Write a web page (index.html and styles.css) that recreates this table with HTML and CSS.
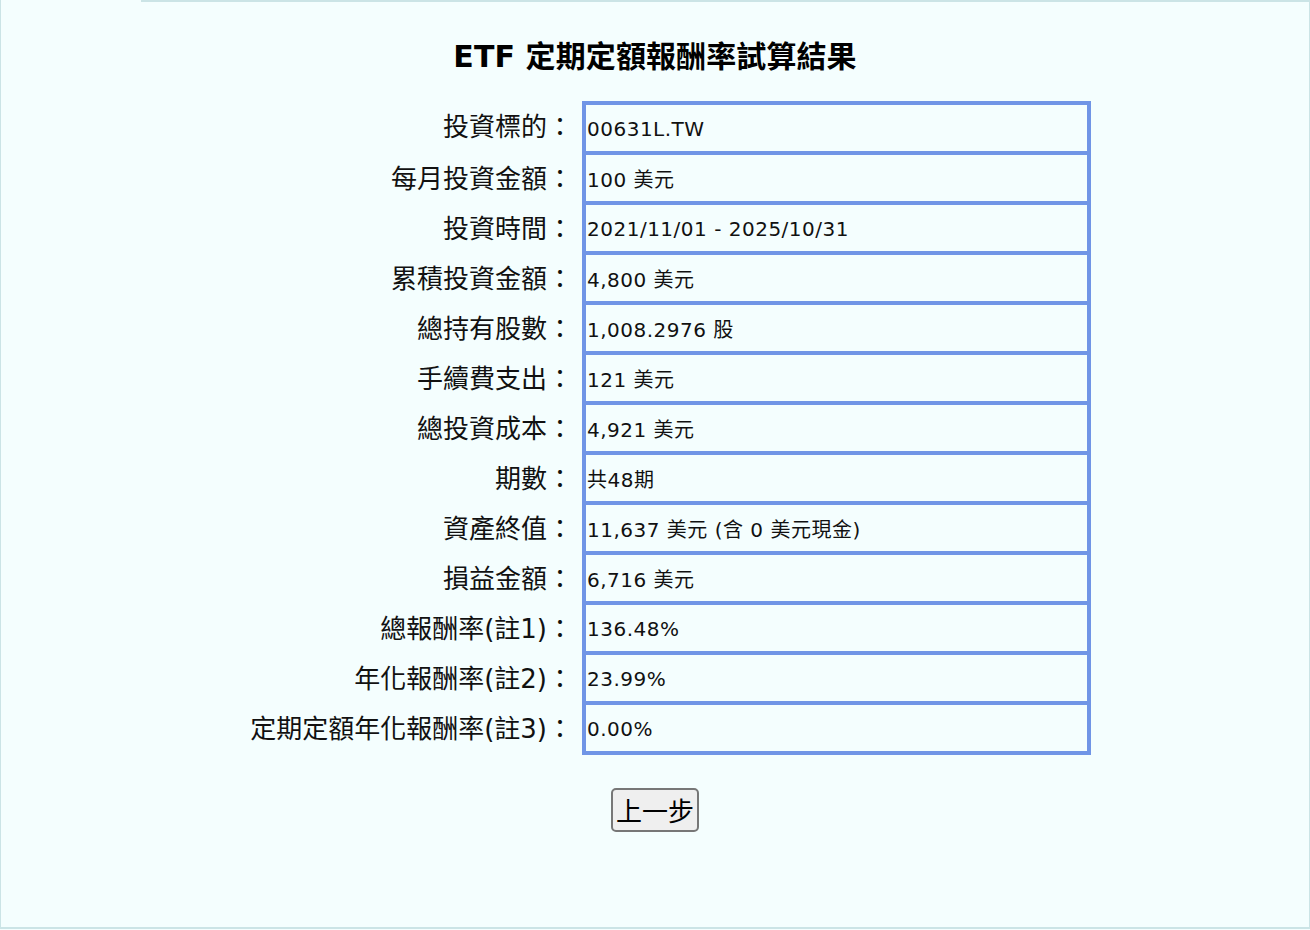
FILE: index.html
```html
<!DOCTYPE html>
<html lang="zh-Hant">
<head>
<meta charset="utf-8">
<title>ETF 定期定額報酬率試算結果</title>
<link rel="stylesheet" href="styles.css">
</head>
<body>
<div class="frame">
  <div class="topline"><span class="gap"></span><span class="rule"></span></div>
  <h2 class="title">ETF 定期定額報酬率試算結果</h2>
  <div class="result">
    <div class="row first"><div class="label">投資標的：</div><div class="value">00631L.TW</div></div>
    <div class="row"><div class="label">每月投資金額：</div><div class="value">100 美元</div></div>
    <div class="row"><div class="label">投資時間：</div><div class="value">2021/11/01 - 2025/10/31</div></div>
    <div class="row"><div class="label">累積投資金額：</div><div class="value">4,800 美元</div></div>
    <div class="row"><div class="label">總持有股數：</div><div class="value">1,008.2976 股</div></div>
    <div class="row"><div class="label">手續費支出：</div><div class="value">121 美元</div></div>
    <div class="row"><div class="label">總投資成本：</div><div class="value">4,921 美元</div></div>
    <div class="row"><div class="label">期數：</div><div class="value">共48期</div></div>
    <div class="row"><div class="label">資產終值：</div><div class="value">11,637 美元 (含 0 美元現金)</div></div>
    <div class="row"><div class="label">損益金額：</div><div class="value">6,716 美元</div></div>
    <div class="row"><div class="label">總報酬率(註1)：</div><div class="value">136.48%</div></div>
    <div class="row"><div class="label">年化報酬率(註2)：</div><div class="value">23.99%</div></div>
    <div class="row"><div class="label">定期定額年化報酬率(註3)：</div><div class="value">0.00%</div></div>
  </div>
  <div class="actions"><button class="back" type="button">上一步</button></div>
</div>
</body>
</html>
```

FILE: styles.css
```css
html, body {
  margin: 0;
  padding: 0;
  background: #f4fefe;
}

body {
  font-family: "DejaVu Sans", "Noto Sans CJK TC", sans-serif;
  color: #111;
}

.frame {
  box-sizing: border-box;
  width: 1310px;
  height: 929px;
  background: #f4fefe;
  border-left: 1px solid #cbe4e6;
  border-right: 1px solid #cbe4e6;
  border-bottom: 2px solid #cbe4e6;
}

.topline {
  display: flex;
  height: 2px;
}

.topline .gap {
  width: 140px;
}

.topline .rule {
  flex: 1;
  background: #cbe4e6;
}

.title {
  margin: 36px 0 0;
  font-size: 30px;
  line-height: 38px;
  font-weight: bold;
  text-align: center;
  letter-spacing: 0.1px;
  color: #000;
}

.result {
  margin-top: 25px;
  margin-left: 245px;
  width: 846px;
}

.row {
  display: grid;
  grid-template-columns: 336px 509px;
}

.label {
  display: flex;
  align-items: center;
  justify-content: flex-end;
  padding-right: 9px;
  padding-bottom: 7px;
  font-size: 26px;
  color: #111;
  white-space: nowrap;
}

.value {
  box-sizing: border-box;
  height: 50px;
  border: 4px solid #7095e6;
  border-top-width: 0;
  display: flex;
  align-items: center;
  padding: 1px 0 0 1px;
  font-size: 20px;
  letter-spacing: 0.5px;
  white-space: nowrap;
}

.row.first .value {
  height: 54px;
  border-top-width: 4px;
}

.actions {
  display: flex;
  justify-content: center;
  margin-top: 33px;
}

.back {
  box-sizing: border-box;
  height: 44px;
  padding: 0 3px;
  font-family: "Noto Sans CJK TC", sans-serif;
  font-size: 26px;
  line-height: 1;
  color: #000;
  background: #efefef;
  border: 2px solid #777;
  border-radius: 5px;
}
```
